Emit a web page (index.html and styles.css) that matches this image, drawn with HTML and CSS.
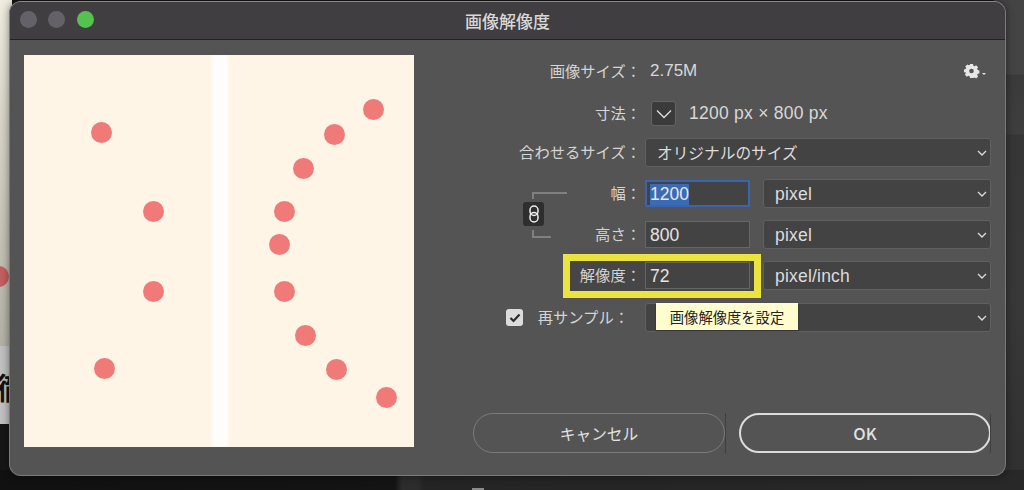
FILE: index.html
```html
<!DOCTYPE html>
<html lang="ja">
<head>
<meta charset="utf-8">
<title>画像解像度</title>
<link rel="stylesheet" href="styles.css">
</head>
<body>
<div class="backdrop">
  <div class="bd-top"></div>
  <div class="bd-dot"></div>
  <div class="bd-paper"><span class="bd-glyph">徹</span></div>
  <div class="bd-right"></div>
  <div class="bd-bottom"><i class="bd-chip"></i></div>
</div>
<div class="dialog">
  <header class="titlebar">
    <div class="lights"><i class="light"></i><i class="light"></i><i class="light green"></i></div>
    <h1 class="title">画像解像度</h1>
  </header>
  <div class="body">
    <div class="preview">
      <div class="stripe"></div>
      <i class="dot" style="left:67px;top:67px"></i>
      <i class="dot" style="left:119px;top:146px"></i>
      <i class="dot" style="left:119px;top:226px"></i>
      <i class="dot" style="left:70px;top:303px"></i>
      <i class="dot" style="left:339px;top:44px"></i>
      <i class="dot" style="left:300px;top:69px"></i>
      <i class="dot" style="left:269px;top:103px"></i>
      <i class="dot" style="left:250px;top:146px"></i>
      <i class="dot" style="left:245px;top:179px"></i>
      <i class="dot" style="left:250px;top:226px"></i>
      <i class="dot" style="left:271px;top:270px"></i>
      <i class="dot" style="left:302px;top:304px"></i>
      <i class="dot" style="left:352px;top:332px"></i>
    </div>
    <div class="panel">
      <div class="form">
        <div class="row row-info">
          <span class="label">画像サイズ：</span>
          <span class="value">2.75M</span>
          <svg class="gear" viewBox="0 0 24 16" width="24" height="16" aria-hidden="true">
            <path fill="#e6e6e6" fill-rule="evenodd" d="M6 1h3l.4 1.7 1.2.5 1.500-.9 2 2-.9 1.500.5 1.200 1.700.4v3l-1.700.4-.5 1.200.9 1.500-2 2-1.500-.9-1.200.5L9 15H6l-.4-1.700-1.200-.5-1.500.9-2-2 .9-1.500-.5-1.200L0 9.500v-3l1.700-.4.5-1.200-.9-1.500 2-2 1.500.9 1.200-.5zM7.500 5.700a2.300 2.300 0 1 0 0 4.600 2.300 2.300 0 0 0 0-4.600z"/>
            <path fill="#e6e6e6" d="M18 10h4l-2 2z"/>
          </svg>
        </div>
        <div class="row row-dim">
          <span class="label">寸法：</span>
          <span class="toggle"><svg viewBox="0 0 16 10" width="16" height="10" aria-hidden="true"><path d="M1 1.500l7 7 7-7" fill="none" stroke="#e0e0e0" stroke-width="1.300"/></svg></span>
          <span class="value dim">1200 px × 800 px</span>
        </div>
        <div class="row row-fit">
          <span class="label">合わせるサイズ：</span>
          <div class="select wide"><span>オリジナルのサイズ</span><svg class="chev" viewBox="0 0 10 6" width="10" height="6" aria-hidden="true"><path d="M1 1l4 4 4-4" fill="none" stroke="#dcdcdc" stroke-width="1.300"/></svg></div>
        </div>
        <div class="link-group">
          <div class="linker">
            <i class="bracket top"></i>
            <span class="link-btn"><svg viewBox="0 0 12 20" width="12" height="20" aria-hidden="true"><rect x="2" y="2" width="8" height="9.500" rx="4" fill="none" stroke="#f0f0f0" stroke-width="1.500"/><rect x="2" y="8.500" width="8" height="9.500" rx="4" fill="none" stroke="#f0f0f0" stroke-width="1.500"/></svg></span>
            <i class="bracket bottom"></i>
          </div>
          <div class="row">
            <span class="label">幅：</span>
            <div class="field focus"><span class="selected">1200</span></div>
            <div class="select"><span>pixel</span><svg class="chev" viewBox="0 0 10 6" width="10" height="6" aria-hidden="true"><path d="M1 1l4 4 4-4" fill="none" stroke="#dcdcdc" stroke-width="1.300"/></svg></div>
          </div>
          <div class="row">
            <span class="label">高さ：</span>
            <div class="field"><span>800</span></div>
            <div class="select"><span>pixel</span><svg class="chev" viewBox="0 0 10 6" width="10" height="6" aria-hidden="true"><path d="M1 1l4 4 4-4" fill="none" stroke="#dcdcdc" stroke-width="1.300"/></svg></div>
          </div>
        </div>
        <div class="row">
          <div class="highlight">
            <span class="label">解像度：</span>
            <div class="field"><span>72</span></div>
          </div>
          <div class="select"><span>pixel/inch</span><svg class="chev" viewBox="0 0 10 6" width="10" height="6" aria-hidden="true"><path d="M1 1l4 4 4-4" fill="none" stroke="#dcdcdc" stroke-width="1.300"/></svg></div>
        </div>
        <div class="row row-resample">
          <span class="check"><svg viewBox="0 0 12 10" width="12" height="10" aria-hidden="true"><path d="M1.500 5l3 3 6-6.500" fill="none" stroke="#2c2c2c" stroke-width="2.200"/></svg></span>
          <span class="label resample">再サンプル：</span>
          <div class="select wide"><span></span><svg class="chev" viewBox="0 0 10 6" width="10" height="6" aria-hidden="true"><path d="M1 1l4 4 4-4" fill="none" stroke="#dcdcdc" stroke-width="1.300"/></svg>
            <div class="tooltip">画像解像度を設定</div>
          </div>
        </div>
      </div>
      <div class="actions">
        <button class="btn">キャンセル</button>
        <button class="btn primary">OK</button>
      </div>
    </div>
  </div>
</div>
</body>
</html>
```
FILE: styles.css
```css
* { box-sizing: border-box; }
html, body { margin: 0; height: 100%; }
body {
  position: relative;
  width: 1024px;
  height: 490px;
  overflow: hidden;
  background: #161616;
  font-family: "Liberation Sans", "Noto Sans CJK JP", sans-serif;
  color: #dcdcdc;
}
.backdrop { position: absolute; inset: 0; }
.bd-top { position: absolute; left: 0; top: 0; width: 12px; height: 346px; background: linear-gradient(#f0ede0, #d8d5c8 35%, #b4b2a6); }
.bd-dot { position: absolute; left: -12px; top: 266px; width: 21px; height: 21px; border-radius: 50%; background: #c4605f; }
.bd-paper { position: absolute; left: 0; top: 346px; width: 12px; height: 78px; background: #c2c2c2; }
.bd-glyph { position: absolute; left: -3px; top: 22px; font: 700 30px/1.2 "Noto Sans CJK JP", sans-serif; color: #111; }
.bd-right { position: absolute; right: 0; top: 0; width: 30px; height: 476px; background: linear-gradient(#444 0, #444 74px, #3a3a3a 75px, #3e3e3e 134px, #363636 135px, #383838 300px, #303030 100%); }
.bd-bottom { position: absolute; left: 0; right: 0; top: 470px; bottom: 0; background: linear-gradient(90deg, #111 0, #141414 395px, #2c2c2c 402px, #2c2c2c 418px, #242424 424px, #282828 100%); }
.bd-chip { position: absolute; left: 472px; bottom: 0; width: 12px; height: 2px; background: #8a8a8a; }

.dialog {
  position: absolute;
  left: 9px;
  top: 1px;
  width: 997px;
  height: 475px;
  border-radius: 12px;
  background: #545454;
  border: 1px solid #7a7a7a;
  border-top-color: #8a8a8a;
  overflow: hidden;
  box-shadow: 0 0 8px rgba(0,0,0,.45);
}
.titlebar {
  position: relative;
  height: 38px;
  background: #403e40;
  border-bottom: 1px solid #232323;
  display: flex;
  align-items: center;
  justify-content: center;
}
.lights { position: absolute; left: 9.500px; top: 9px; display: flex; gap: 11.500px; }
.light { width: 17px; height: 17px; border-radius: 50%; background: #646268; }
.light.green { background: #54c24e; }
.title { margin: 0; font: 500 17px "Noto Sans CJK JP", sans-serif; color: #d8d8d8; }

.body { display: flex; padding: 15px 14px 0 14px; }
.preview {
  position: relative;
  flex: none;
  width: 390px;
  height: 392px;
  background: #fef5e7;
  overflow: hidden;
}
.stripe { position: absolute; left: 188px; top: 0; bottom: 0; width: 16px; background: #fffdfb; filter: blur(1.500px); }
.dot { position: absolute; width: 21px; height: 21px; border-radius: 50%; background: #f07a78; }

.panel { flex: 1; position: relative; height: 392px; }
.form { display: flex; flex-direction: column; }
.row { display: flex; align-items: center; height: 29px; }
.label {
  flex: none;
  width: 227px;
  text-align: right;
  padding-bottom: 3px;
  font-size: 15.300px;
  font-family: "Noto Sans CJK JP", sans-serif;
  color: #d4d4d4;
  white-space: nowrap;
}
.value { margin-left: 9px; color: #d8d8d8; font-size: 17px; }
.row-info { height: 32px; margin-bottom: 12px; }
.gear { margin-left: auto; margin-right: 3px; }
.row-dim { margin-bottom: 10px; }
.toggle {
  flex: none;
  margin-left: 10px;
  width: 25px;
  height: 25px;
  border-radius: 3px;
  background: #3b3b3b;
  border: 1px solid #646464;
  display: flex;
  align-items: center;
  justify-content: center;
}
.value.dim { margin-left: 13px; font-size: 17.500px; letter-spacing: .25px; }
.row-fit { margin-bottom: 12px; }

.select {
  position: relative;
  flex: none;
  width: 228px;
  height: 29px;
  border-radius: 3px;
  background: #434343;
  border: 1px solid #606060;
  display: flex;
  align-items: center;
  justify-content: space-between;
  padding: 1px 3px 0 11px;
  color: #dcdcdc;
  font-size: 17.500px;
  letter-spacing: .2px;
}
.select.wide { width: 346px; margin-left: 4px; padding-top: 0; font-family: "Noto Sans CJK JP", sans-serif; font-size: 15.700px; letter-spacing: 0; }
.field {
  flex: none;
  width: 105px;
  height: 27px;
  margin-left: 4px;
  margin-right: 13px;
  background: #434343;
  border: 1px solid #666;
  display: flex;
  align-items: center;
  padding: 1px 0 0 4px;
  font-size: 17.500px;
  color: #e4e4e4;
}
.field.focus { border-color: #3a64b2; box-shadow: 0 0 0 1px #3a64b2 inset; }
.selected { background: #3a6cb5; color: #e8e8e8; line-height: 21px; }

.link-group { position: relative; display: flex; flex-direction: column; gap: 12px; margin-bottom: 12px; }
.linker { position: absolute; left: 109px; top: 13px; width: 50px; height: 46px; }
.bracket { position: absolute; left: 9px; border-left: 2px solid #808080; }
.bracket.top { top: 0; width: 35px; height: 7px; border-top: 2px solid #808080; }
.bracket.bottom { bottom: 0; width: 19px; height: 8px; border-bottom: 2px solid #808080; }
.link-btn {
  position: absolute;
  left: 0;
  top: 10px;
  width: 21px;
  height: 24px;
  border-radius: 3px;
  background: #2e2e2e;
  display: flex;
  align-items: center;
  justify-content: center;
}

.highlight {
  flex: none;
  display: flex;
  align-items: center;
  width: 198px;
  height: 44px;
  margin-left: 149px;
  margin-right: 2px;
  border: 7px solid #ebe33f;
  background: #464646;
}
.highlight .label { width: 71px; }
.highlight .field { margin: 0 0 0 4px; }

.row-resample { margin-top: 13px; position: relative; }
.check {
  position: absolute;
  left: 92px;
  top: 6px;
  width: 17px;
  height: 17px;
  border-radius: 3px;
  background: #dcdcdc;
  display: flex;
  align-items: center;
  justify-content: center;
}
.label.resample { width: 215px; }
.row-resample .select.wide { margin-left: 16px; }
.tooltip {
  position: absolute;
  left: 10px;
  top: -1px;
  width: 142px;
  height: 27px;
  background: #fffdd0;
  color: #222;
  font: 14.300px "Noto Sans CJK JP", sans-serif;
  display: flex;
  align-items: center;
  justify-content: center;
  box-shadow: 0 1px 2px rgba(0,0,0,.35);
}

.actions { position: absolute; left: 59px; top: 358px; display: flex; gap: 14px; }
.btn {
  position: relative;
  width: 252px;
  height: 40px;
  border-radius: 20px;
  background: transparent;
  border: 1.500px solid #7c7c7c;
  color: #e2e2e2;
  font: 400 15.700px "Noto Sans CJK JP", sans-serif;
}
.btn::after { content: ""; position: absolute; right: -1.500px; top: -1.500px; bottom: -1.500px; width: 1px; background: #3f3f3f; }
.btn.primary { border: 2px solid #dcdcdc; font: 500 16.500px "Noto Sans CJK JP", sans-serif; }
```
